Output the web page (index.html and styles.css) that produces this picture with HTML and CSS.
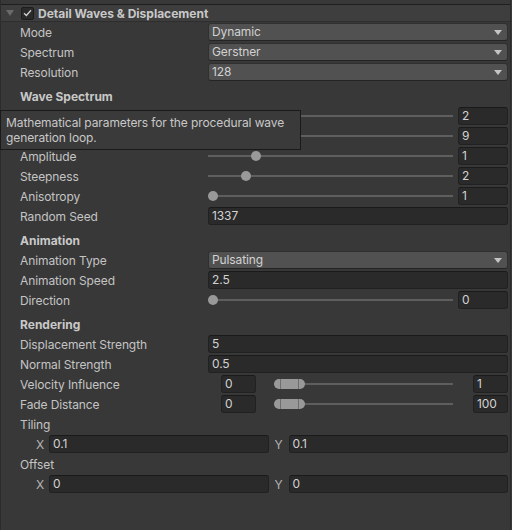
FILE: index.html
```html
<!DOCTYPE html>
<html>
<head>
<meta charset="utf-8">
<link rel="stylesheet" href="styles.css">
</head>
<body>
<div class="inspector">
  <div class="header">
    <span class="fold"></span>
    <span class="check"><svg width="9" height="8" viewBox="0 0 9 8"><path d="M1 4.2 L3.4 6.5 L8 1.2" fill="none" stroke="#d0d0d0" stroke-width="1.3"/></svg></span>
    <span class="title">Detail Waves &amp; Displacement</span>
  </div>
  <div class="content">
    <div class="row"><span class="label">Mode</span><div class="dropdown">Dynamic<span class="arrow"></span></div></div>
    <div class="row"><span class="label">Spectrum</span><div class="dropdown">Gerstner<span class="arrow"></span></div></div>
    <div class="row"><span class="label">Resolution</span><div class="dropdown">128<span class="arrow"></span></div></div>

    <div class="section">Wave Spectrum</div>
    <div class="row"><span class="label"></span><div class="slider"><span class="track"></span><span class="thumb" style="left:40px"></span></div><div class="field num">2</div></div>
    <div class="row"><span class="label"></span><div class="slider"><span class="track"></span><span class="thumb" style="left:60px"></span></div><div class="field num">9</div></div>
    <div class="row"><span class="label">Amplitude</span><div class="slider"><span class="track"></span><span class="thumb" style="left:43px"></span></div><div class="field num">1</div></div>
    <div class="row"><span class="label">Steepness</span><div class="slider"><span class="track"></span><span class="thumb" style="left:33px"></span></div><div class="field num">2</div></div>
    <div class="row"><span class="label">Anisotropy</span><div class="slider"><span class="track"></span><span class="thumb" style="left:0px"></span></div><div class="field num">1</div></div>
    <div class="row"><span class="label">Random Seed</span><div class="field wide">1337</div></div>

    <div class="section">Animation</div>
    <div class="row"><span class="label">Animation Type</span><div class="dropdown">Pulsating<span class="arrow"></span></div></div>
    <div class="row"><span class="label">Animation Speed</span><div class="field wide">2.5</div></div>
    <div class="row"><span class="label">Direction</span><div class="slider"><span class="track"></span><span class="thumb" style="left:0px"></span></div><div class="field num">0</div></div>

    <div class="section">Rendering</div>
    <div class="row"><span class="label">Displacement Strength</span><div class="field wide">5</div></div>
    <div class="row"><span class="label">Normal Strength</span><div class="field wide">0.5</div></div>
    <div class="row"><span class="label">Velocity Influence</span>
      <div class="minmax">
        <div class="field small">0</div>
        <div class="range"><span class="track"></span><span class="rthumb"><i></i><i></i></span></div>
        <div class="field small">1</div>
      </div>
    </div>
    <div class="row"><span class="label">Fade Distance</span>
      <div class="minmax">
        <div class="field small">0</div>
        <div class="range"><span class="track"></span><span class="rthumb"><i></i><i></i></span></div>
        <div class="field small">100</div>
      </div>
    </div>
    <div class="row"><span class="label">Tiling</span></div>
    <div class="row vec"><span class="axis">X</span><div class="field half">0.1</div><span class="axis y">Y</span><div class="field half">0.1</div></div>
    <div class="row"><span class="label">Offset</span></div>
    <div class="row vec"><span class="axis">X</span><div class="field half">0</div><span class="axis y">Y</span><div class="field half">0</div></div>
  </div>
  <div class="tooltip">Mathematical parameters for the procedural wave<br>generation loop.</div>
</div>
</body>
</html>
```

FILE: styles.css
```css
* { box-sizing: border-box; }
html, body {
  margin: 0;
  padding: 0;
  background: #3a3a3a;
}
body {
  width: 512px;
  height: 530px;
  overflow: hidden;
  font-family: Inter, "Noto Sans", sans-serif;
  font-size: 12px;
  letter-spacing: -0.1px;
  color: #c4c4c4;
}
.inspector {
  position: relative;
  width: 511px;
  height: 530px;
  background: #383838;
  border-left: 1px solid #2c2c2c;
  border-right: 1px solid #2c2c2c;
  padding-top: 4px;
}
.header {
  height: 18px;
  background: #3e3e3e;
  border-top: 1px solid #1f1f1f;
  border-bottom: 1px solid #2e2e2e;
  display: flex;
  align-items: center;
}
.fold {
  width: 0;
  height: 0;
  margin-left: 5px;
  border-left: 4px solid transparent;
  border-right: 4px solid transparent;
  border-top: 6px solid #6a6a6a;
}
.check {
  margin-left: 7px;
  width: 13px;
  height: 13px;
  background: #2a2a2a;
  border: 1px solid #1c1c1c;
  border-radius: 2px;
  display: flex;
  align-items: center;
  justify-content: center;
}
.title {
  margin-left: 4px;
  font-weight: 700;
  letter-spacing: 0;
  color: #c8c8c8;
}
.content {
  display: flex;
  flex-direction: column;
}
.row {
  height: 20px;
  display: flex;
  align-items: center;
  padding-left: 19px;
  padding-right: 2px;
}
.label {
  width: 188px;
  flex: none;
  white-space: nowrap;
}
.section {
  height: 24px;
  padding-left: 19px;
  padding-top: 7px;
  font-weight: 700;
  letter-spacing: 0;
  color: #c8c8c8;
  line-height: 16px;
}
.dropdown {
  position: relative;
  flex: 1;
  height: 18px;
  background: #515151;
  border: 1px solid #303030;
  border-bottom-color: #242424;
  border-radius: 3px;
  padding-left: 3px;
  line-height: 16px;
  color: #d2d2d2;
}
.arrow {
  position: absolute;
  right: 5px;
  top: 6px;
  width: 0;
  height: 0;
  border-left: 4px solid transparent;
  border-right: 4px solid transparent;
  border-top: 5px solid #c4c4c4;
}
.field {
  height: 18px;
  background: #2a2a2a;
  border: 1px solid #212121;
  border-top-color: #1a1a1a;
  border-radius: 3px;
  padding-left: 3px;
  line-height: 16px;
  color: #d2d2d2;
}
.field.wide { flex: 1; }
.field.num { width: 50px; flex: none; margin-left: 5px; }
.field.small { width: 35px; flex: none; }
.field.half { flex: 1; }
.slider {
  position: relative;
  flex: 1;
  height: 18px;
  display: flex;
  align-items: center;
}
.track {
  display: block;
  width: 100%;
  height: 2px;
  background: #5e5e5e;
}
.thumb {
  position: absolute;
  top: 4px;
  width: 10px;
  height: 10px;
  border-radius: 50%;
  background: #999999;
}
.minmax {
  flex: 1;
  display: flex;
  align-items: center;
  padding-left: 13px;
}
.range {
  position: relative;
  flex: 1;
  height: 18px;
  margin: 0 20px 0 18px;
  display: flex;
  align-items: center;
}
.rthumb {
  position: absolute;
  left: 0;
  top: 4px;
  width: 31px;
  height: 10px;
  border-radius: 5px;
  background: #999999;
}
.rthumb i {
  position: absolute;
  top: 0;
  width: 1px;
  height: 10px;
  background: #6e6e6e;
}
.rthumb i:first-child { left: 6px; }
.rthumb i:last-child { right: 6px; }
.row.vec { padding-left: 35px; }
.axis {
  width: 13px;
  flex: none;
  color: #b4b4b4;
}
.axis.y {
  width: 20px;
  padding-left: 6px;
}
.tooltip {
  position: absolute;
  left: -1px;
  top: 110px;
  width: 301px;
  height: 40px;
  background: #3a3a3a;
  border: 1px solid #1a1a1a;
  padding: 4px 0 0 5px;
  line-height: 15px;
  color: #c8c8c8;
}
```
